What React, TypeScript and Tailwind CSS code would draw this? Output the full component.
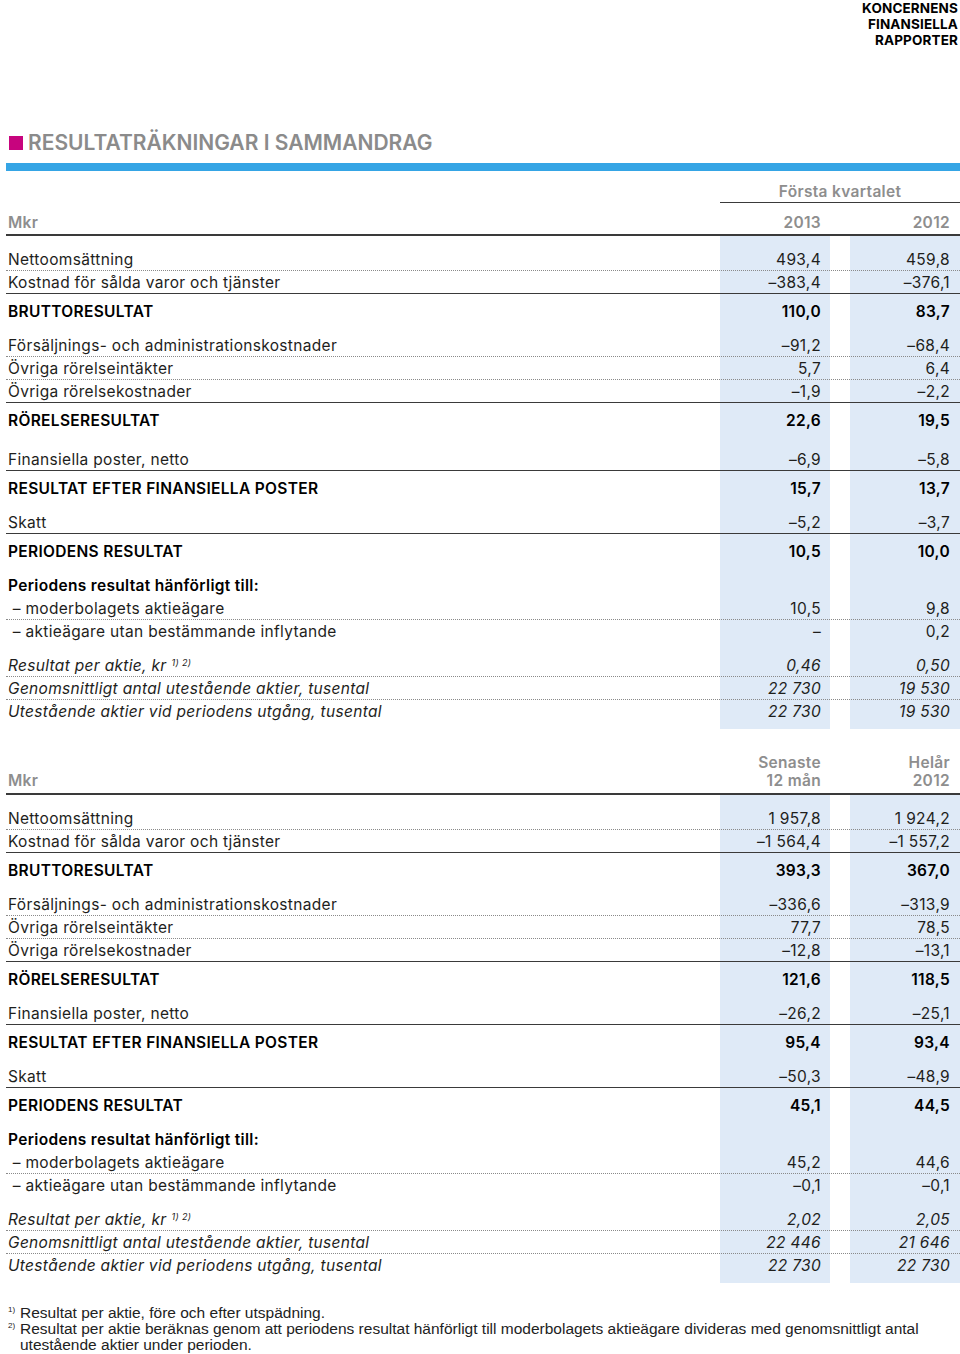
import type { ReactNode } from 'react'

type Line = 'dot' | 'solid' | 'none'
type Row = { label: ReactNode; a?: string; b?: string; line: Line; strong?: boolean }
type Block =
  | { kind: 'group'; rows: Row[]; italic?: boolean; mt?: string }
  | { kind: 'total'; label: string; a: string; b: string }

const lineClass: Record<Line, string> = {
  dot: 'border-b border-dotted border-[#8a8a8a]',
  solid: 'border-b border-solid border-[#3a3a3a]',
  none: 'border-b border-transparent',
}

const eps = (
  <>
    Resultat per aktie, kr<sup className="ml-[5px] text-[9px]">1) 2)</sup>
  </>
)

function q1(): Block[] {
  return [
    {
      kind: 'group',
      mt: 'pt-[12px]',
      rows: [
        { label: 'Nettoomsättning', a: '493,4', b: '459,8', line: 'dot' },
        { label: 'Kostnad för sålda varor och tjänster', a: '–383,4', b: '–376,1', line: 'solid' },
      ],
    },
    { kind: 'total', label: 'BRUTTORESULTAT', a: '110,0', b: '83,7' },
    {
      kind: 'group',
      rows: [
        { label: 'Försäljnings- och administrationskostnader', a: '–91,2', b: '–68,4', line: 'dot' },
        { label: 'Övriga rörelseintäkter', a: '5,7', b: '6,4', line: 'dot' },
        { label: 'Övriga rörelsekostnader', a: '–1,9', b: '–2,2', line: 'solid' },
      ],
    },
    { kind: 'total', label: 'RÖRELSERESULTAT', a: '22,6', b: '19,5' },
    {
      kind: 'group',
      mt: 'pt-[5px]',
      rows: [{ label: 'Finansiella poster, netto', a: '–6,9', b: '–5,8', line: 'solid' }],
    },
    { kind: 'total', label: 'RESULTAT EFTER FINANSIELLA POSTER', a: '15,7', b: '13,7' },
    { kind: 'group', rows: [{ label: 'Skatt', a: '–5,2', b: '–3,7', line: 'solid' }] },
    { kind: 'total', label: 'PERIODENS RESULTAT', a: '10,5', b: '10,0' },
    {
      kind: 'group',
      rows: [
        { label: 'Periodens resultat hänförligt till:', line: 'none', strong: true },
        { label: '\u00a0– moderbolagets aktieägare', a: '10,5', b: '9,8', line: 'dot' },
        { label: '\u00a0– aktieägare utan bestämmande inflytande', a: '–', b: '0,2', line: 'none' },
      ],
    },
    {
      kind: 'group',
      italic: true,
      mt: 'pt-[11px]',
      rows: [
        { label: eps, a: '0,46', b: '0,50', line: 'dot' },
        { label: 'Genomsnittligt antal utestående aktier, tusental', a: '22 730', b: '19 530', line: 'dot' },
        { label: 'Utestående aktier vid periodens utgång, tusental', a: '22 730', b: '19 530', line: 'none' },
      ],
    },
  ]
}

function ltm(): Block[] {
  return [
    {
      kind: 'group',
      mt: 'pt-[12px]',
      rows: [
        { label: 'Nettoomsättning', a: '1 957,8', b: '1 924,2', line: 'dot' },
        { label: 'Kostnad för sålda varor och tjänster', a: '–1 564,4', b: '–1 557,2', line: 'solid' },
      ],
    },
    { kind: 'total', label: 'BRUTTORESULTAT', a: '393,3', b: '367,0' },
    {
      kind: 'group',
      rows: [
        { label: 'Försäljnings- och administrationskostnader', a: '–336,6', b: '–313,9', line: 'dot' },
        { label: 'Övriga rörelseintäkter', a: '77,7', b: '78,5', line: 'dot' },
        { label: 'Övriga rörelsekostnader', a: '–12,8', b: '–13,1', line: 'solid' },
      ],
    },
    { kind: 'total', label: 'RÖRELSERESULTAT', a: '121,6', b: '118,5' },
    { kind: 'group', rows: [{ label: 'Finansiella poster, netto', a: '–26,2', b: '–25,1', line: 'solid' }] },
    { kind: 'total', label: 'RESULTAT EFTER FINANSIELLA POSTER', a: '95,4', b: '93,4' },
    { kind: 'group', rows: [{ label: 'Skatt', a: '–50,3', b: '–48,9', line: 'solid' }] },
    { kind: 'total', label: 'PERIODENS RESULTAT', a: '45,1', b: '44,5' },
    {
      kind: 'group',
      rows: [
        { label: 'Periodens resultat hänförligt till:', line: 'none', strong: true },
        { label: '\u00a0– moderbolagets aktieägare', a: '45,2', b: '44,6', line: 'dot' },
        { label: '\u00a0– aktieägare utan bestämmande inflytande', a: '–0,1', b: '–0,1', line: 'none' },
      ],
    },
    {
      kind: 'group',
      italic: true,
      mt: 'pt-[11px]',
      rows: [
        { label: eps, a: '2,02', b: '2,05', line: 'dot' },
        { label: 'Genomsnittligt antal utestående aktier, tusental', a: '22 446', b: '21 646', line: 'dot' },
        { label: 'Utestående aktier vid periodens utgång, tusental', a: '22 730', b: '22 730', line: 'none' },
      ],
    },
  ]
}

function Cells({ label, a, b, className = '' }: { label: ReactNode; a?: ReactNode; b?: ReactNode; className?: string }) {
  return (
    <div className={`flex items-center ${className}`}>
      <div className="flex-1 whitespace-nowrap pl-[2px]">{label}</div>
      <div className="w-[110px] whitespace-nowrap pr-[9px] text-right">{a}</div>
      <div className="w-[20px]" />
      <div className="w-[110px] whitespace-nowrap pr-[10px] text-right">{b}</div>
    </div>
  )
}

function Body({ blocks }: { blocks: Block[] }) {
  return (
    <div className="bg-[linear-gradient(to_right,transparent_714px,#dfeaf7_714px,#dfeaf7_824px,transparent_824px,transparent_844px,#dfeaf7_844px)] pb-[6px] text-[15.5px]">
      {blocks.map((blk, i) =>
        blk.kind === 'total' ? (
          <div key={i} className="pt-[6px] pb-[12px] font-semibold text-black">
            <Cells label={blk.label} a={blk.a} b={blk.b} className="h-[22px] pt-px" />
          </div>
        ) : (
          <div key={i} className={`${blk.mt ?? ''} ${blk.italic ? 'italic' : ''}`}>
            {blk.rows.map((r, j) => (
              <Cells
                key={j}
                label={r.label}
                a={r.a}
                b={r.b}
                className={`h-[23px] pt-px ${lineClass[r.line]} ${r.strong ? 'font-semibold text-black' : ''}`}
              />
            ))}
          </div>
        ),
      )}
    </div>
  )
}

export default function App() {
  return (
    <div className="min-h-[1354px] w-[960px] bg-white font-['Inter','Noto_Sans',sans-serif] text-[#1e1e1c] tracking-[0.02em]">
      <div className="flex h-[48px] justify-end pr-[2px]">
        <div className="text-right text-[13.5px] font-bold leading-[16px] tracking-[0.01em] text-black">
          KONCERNENS
          <br />
          FINANSIELLA
          <br />
          RAPPORTER
        </div>
      </div>

      <div className="mt-[81px] flex h-[28px] items-center">
        <div className="ml-[9px] h-[14px] w-[14px] bg-[#c7047e]" />
        <h1 className="ml-[5px] text-[21px] font-semibold tracking-normal text-[#8b8b8b]">
          RESULTATRÄKNINGAR I SAMMANDRAG
        </h1>
      </div>
      <div className="mt-[6px] ml-[6px] h-[8px] bg-[#35a5e5]" />

      <div className="ml-[6px]">
        {/* Första kvartalet */}
        <div className="mt-[9px] flex">
          <div className="flex-1" />
          <div className="h-[23px] w-[240px] border-b border-[#3a3a3a] pt-px text-center text-[15.5px] font-semibold leading-[22px] text-[#8e8e8e]">
            Första kvartalet
          </div>
        </div>
        <Cells
          label="Mkr"
          a="2013"
          b="2012"
          className="mt-[8px] h-[25px] border-b-2 border-[#3a3a3a] pt-px text-[15.5px] font-semibold text-[#8e8e8e]"
        />
        <Body blocks={q1()} />

        {/* Senaste 12 mån / Helår */}
        <div className="mt-[25px] flex h-[41px] items-end border-b-2 border-[#3a3a3a] pb-[3px] text-[15.5px] font-semibold leading-[18px] text-[#8e8e8e]">
          <div className="flex-1 pl-[2px]">Mkr</div>
          <div className="w-[110px] pr-[9px] text-right">
            Senaste
            <br />
            12 mån
          </div>
          <div className="w-[20px]" />
          <div className="w-[110px] pr-[10px] text-right">
            Helår
            <br />
            2012
          </div>
        </div>
        <Body blocks={ltm()} />
      </div>

      <div className="mt-[22px] pl-[8px] font-['Liberation_Sans',Arial,sans-serif] text-[15.5px] leading-[16px] tracking-normal text-[#222]">
        <div className="flex">
          <span className="w-[12px] text-[8px] leading-[10px]">1)</span>
          <span>Resultat per aktie, före och efter utspädning.</span>
        </div>
        <div className="flex">
          <span className="w-[12px] text-[8px] leading-[10px]">2)</span>
          <span className="whitespace-nowrap">
            Resultat per aktie beräknas genom att periodens resultat hänförligt till moderbolagets aktieägare divideras med genomsnittligt antal
            <br />
            utestående aktier under perioden.
          </span>
        </div>
      </div>
    </div>
  )
}
